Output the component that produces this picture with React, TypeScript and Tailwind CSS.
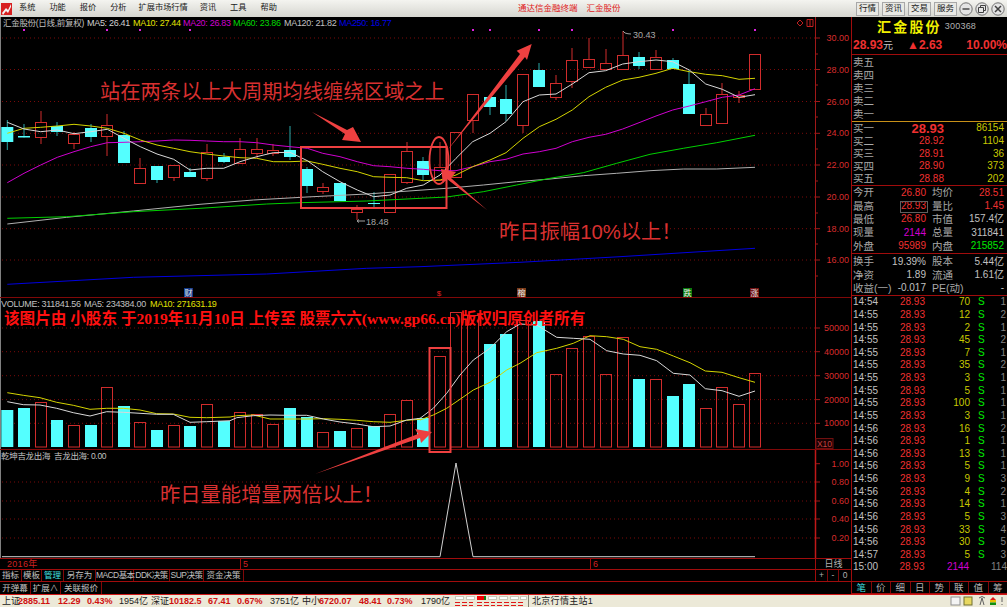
import React from "react";

type Candle = [number, number, number, number, number, "r" | "c"];

// chart data is read off the picture: x, body top, body bottom, wick top, wick bottom
const CANDLES: Candle[] = [
  [7.3, 127, 142, 120, 150, "c"],
  [24, 136, 137.5, 124, 137.5, "c"],
  [41, 122, 137, 111, 144, "r"],
  [57, 126, 132, 122, 136, "c"],
  [74, 134, 143, 132, 149, "r"],
  [91, 128, 137, 124, 142, "c"],
  [107, 125, 136, 114, 156, "r"],
  [124, 135, 163, 131, 163, "c"],
  [140, 168, 183, 158, 183, "r"],
  [157, 166, 180, 166, 183, "c"],
  [174, 165, 177, 165, 181, "r"],
  [190, 172, 177, 168, 177, "c"],
  [207, 152, 178, 144, 181, "r"],
  [224, 157, 162, 153, 163, "c"],
  [240, 149, 163, 138, 163, "r"],
  [257, 149, 153, 138, 158, "r"],
  [273, 150, 153, 144, 156, "r"],
  [290, 150, 157, 126, 160, "c"],
  [307, 169, 186, 167, 193, "c"],
  [323, 187, 191, 183, 194, "r"],
  [340, 183, 201, 183, 201, "c"],
  [357, 209, 212, 205, 220, "r"],
  [374, 203, 204, 192, 208, "c"],
  [390, 174, 212, 174, 212, "r"],
  [407, 151, 182, 142, 184, "r"],
  [423, 161, 175, 157, 180, "c"],
  [440, 167, 180, 142, 180, "r"],
  [456, 132, 177, 132, 177, "r"],
  [473, 94, 120, 94, 133, "r"],
  [490, 97, 107, 97, 115, "c"],
  [506, 99, 114, 85, 121, "c"],
  [523, 74, 125, 74, 133, "r"],
  [539, 70, 87, 63, 87, "c"],
  [556, 83, 97, 75, 100, "r"],
  [572, 60, 81, 48, 88, "r"],
  [589, 59, 67, 38, 67, "r"],
  [606, 63, 69, 49, 69, "r"],
  [623, 55, 69, 31, 69, "r"],
  [639, 57, 66, 52, 69, "c"],
  [656, 57, 69, 50, 69, "r"],
  [673, 60, 69, 58, 69, "c"],
  [689, 84, 114, 70, 114, "c"],
  [706, 114, 125, 108, 125, "r"],
  [722, 94, 123, 83, 123, "r"],
  [739, 95, 97, 91, 103, "r"],
  [755, 54, 89, 54, 89, "r"],
];

const VOL_BARS: [number, number, "r" | "c"][] = [
  [7.3, 410, "c"], [24, 408, "c"], [41, 402, "r"], [57, 420, "c"], [74, 425, "r"], [91, 425, "c"],
  [107, 387, "r"], [124, 406, "c"], [140, 422, "r"], [157, 430, "c"], [174, 425, "r"], [190, 426, "c"],
  [207, 404, "r"], [224, 421, "c"], [240, 412, "r"], [257, 414, "r"], [273, 424, "r"], [290, 408, "c"],
  [307, 417, "c"], [323, 432, "r"], [340, 431, "c"], [357, 428, "r"], [374, 426, "c"], [390, 414, "r"],
  [407, 400, "r"], [423, 418, "c"], [440, 356, "r"], [456, 312, "r"], [473, 315, "r"], [490, 344, "c"],
  [506, 334, "c"], [523, 320, "r"], [539, 321, "c"], [556, 374, "r"], [572, 348, "r"], [589, 336, "r"],
  [606, 374, "r"], [623, 337, "r"], [639, 379, "c"], [656, 379, "r"], [673, 396, "c"], [689, 384, "c"],
  [706, 408, "r"], [722, 387, "r"], [739, 404, "r"], [755, 373, "r"],
];

const pts = (ox: number, oy: number, list: number[][]) =>
  list.map(([x, y]) => `${(ox + x / 3).toFixed(1)},${(oy + y / 3).toFixed(1)}`).join(" ");

const MA5 =
  pts(0, 0, [[22,367],[72,387],[122,395],[172,390],[222,401],[272,395],[322,388],[372,415],[421,440],[471,462],[521,478],[570,510],[620,505],[671,505],[720,485],[770,470],[820,458],[870,457],[922,482],[968,515],[1020,545],[1072,570],[1121,590],[1170,585],[1220,565],[1270,555],[1320,525]]) +
  " " +
  pts(450, 0, [[18,475],[68,425],[120,400],[168,365],[219,305],[268,285],[318,282],[367,252],[417,218],[467,212],[518,192],[567,185],[618,180],[668,185],[718,210],[767,252],[817,268],[867,292],[915,284]]);
const MA10 =
  pts(0, 0, [[22,400],[72,385],[122,382],[172,378],[222,373],[272,378],[322,385],[372,400],[421,420],[471,435],[521,445],[570,455],[620,462],[671,468],[720,473],[770,475],[820,485],[870,485],[922,483],[968,493],[1020,505],[1072,515],[1121,530],[1170,532],[1220,533],[1270,542],[1320,540]]) +
  " " +
  pts(450, 0, [[18,525],[68,500],[120,480],[168,458],[219,415],[268,380],[318,358],[367,330],[417,290],[467,262],[518,240],[567,232],[618,220],[668,205],[718,215],[767,223],[817,227],[867,238],[915,235]]);
const MA20 =
  pts(0, 0, [[22,548],[72,520],[122,495],[172,472],[222,455],[272,440],[322,428],[372,427],[421,425],[471,423],[521,420],[570,421],[620,423],[671,425],[720,425],[770,428],[820,435],[870,440],[922,445],[968,460],[1020,470],[1072,485],[1121,497],[1170,500],[1220,505],[1270,508],[1320,512]]) +
  " " +
  pts(450, 0, [[18,512],[68,500],[120,485],[168,478],[219,462],[268,455],[318,445],[367,425],[417,412],[467,403],[518,387],[567,368],[618,348],[668,330],[718,318],[767,305],[817,292],[867,285],[915,266]]);
const MA60 =
  pts(0, 200, [[22,55],[200,50],[400,35],[600,25],[800,12],[900,8],[1100,3],[1340,-9]]) +
  " " +
  pts(450, 0, [[100,575],[200,555],[300,535],[400,518],[500,490],[600,463],[700,445],[800,428],[915,406]]);
const MA120 =
  pts(0, 200, [[22,72],[200,52],[400,33],[600,13],[760,0],[920,-9],[1100,-18],[1340,-35]]) +
  " " +
  pts(450, 0, [[100,555],[200,545],[300,537],[400,527],[500,520],[600,512],[700,507],[800,507],[915,502]]);
const MA250 =
  pts(0, 200, [[22,253],[400,232],[800,222],[1100,205],[1260,200]]) +
  " " +
  pts(420, 200, [[300,187],[600,170],[1005,145]]);

const VOL_WHITE =
  pts(0, 370, [[22,95],[70,104],[120,105],[170,115],[220,128],[270,138],[320,125],[370,127],[420,130],[470,133],[520,133],[570,157],[620,155],[690,152]]) +
  " " +
  pts(220, 370, [[50,143],[100,137],[150,135],[200,136],[260,136],[310,147],[360,156],[410,162],[460,170],[510,168],[560,150],[600,145]]) +
  " " +
  pts(420, 200, [[0,655],[40,625],[80,580],[120,525],[160,480],[210,445],[260,395],[300,372],[350,375],[410,412],[460,415],[510,418],[560,452],[610,462],[660,466],[710,482],[760,520],[810,525],[856,566],[906,572],[957,589],[1005,573]]);
const VOL_YELLOW =
  pts(0, 370, [[22,68],[70,76],[120,83],[170,97],[220,106],[270,118],[320,115],[370,115],[420,120],[470,131],[520,132],[570,142],[620,143],[690,141]]) +
  " " +
  pts(220, 370, [[50,137],[100,135],[150,147],[200,147],[260,147],[310,146],[360,148],[410,151],[460,155],[510,157],[560,151],[600,148]]) +
  " " +
  pts(420, 200, [[0,660],[40,645],[80,625],[120,598],[160,570],[210,547],[260,510],[300,490],[350,458],[410,445],[460,430],[510,407],[560,410],[610,418],[660,440],[710,448],[760,468],[810,488],[856,513],[906,517],[957,533],[1005,547]]);

const RED = "#d02c2c";
const CYAN = "#54ffff";
const GRID = "#7a0a0a";
const AXIS = "#a01818";
const ANNOT = "#ee4040";

function Grid({ ys }: { ys: number[] }) {
  return (
    <>
      {ys.map((y) => (
        <line key={y} x1={2} x2={815} y1={y} y2={y} stroke={GRID} strokeDasharray="1 3" />
      ))}
    </>
  );
}

function AxisLabels({ rows }: { rows: [number, string][] }) {
  return (
    <>
      {rows.map(([y, label]) => (
        <g key={label}>
          <line x1={816} x2={820} y1={y} y2={y} stroke={AXIS} />
          <text x={849} y={y + 3} fontSize="9" fill="#d82c2c" textAnchor="end">
            {label}
          </text>
        </g>
      ))}
    </>
  );
}

const PRICE_ROWS: [number, string][] = [
  [38, "30.00"], [69.5, "28.00"], [101.5, "26.00"], [133.3, "24.00"],
  [165, "22.00"], [197, "20.00"], [228.7, "18.00"], [260, "16.00"],
];

function PriceChart() {
  const marks = [24, 107, 140, 190, 473, 490, 539, 572, 673, 755];
  return (
    <svg viewBox="0 17 851 280" className="block w-[851px] h-[280px]">
      <Grid ys={PRICE_ROWS.map((r) => r[0])} />
      <line x1={0.5} x2={0.5} y1={17} y2={297} stroke="#808080" />
      <line x1={815.5} x2={815.5} y1={17} y2={297} stroke={AXIS} />
      <AxisLabels rows={PRICE_ROWS} />
      {[54, 85, 117, 149, 181, 213, 244, 276].map((y) => (
        <line key={y} x1={816} x2={818} y1={y} y2={y} stroke={AXIS} />
      ))}
      {marks.map((x) => (
        <path key={x} d={`M${x - 1} 29 l2 2 M${x + 1} 29 l-2 2`} stroke="#e020e0" />
      ))}
      {CANDLES.map(([x, top, bottom, hi, lo, kind]) =>
        kind === "c" ? (
          <g key={x}>
            <line x1={x} x2={x} y1={hi} y2={lo} stroke="#2aa8a8" />
            <rect x={x - 6} y={top} width={12} height={bottom - top} fill={CYAN} />
          </g>
        ) : (
          <g key={x} stroke={RED} fill="none">
            <line x1={x} x2={x} y1={hi} y2={top} />
            <line x1={x} x2={x} y1={bottom} y2={lo} />
            <rect x={x - 5.5} y={top + 0.5} width={11} height={bottom - top} />
          </g>
        )
      )}
      <polyline points={MA250} fill="none" stroke="#0000e0" />
      <polyline points={MA120} fill="none" stroke="#b0b0b0" />
      <polyline points={MA60} fill="none" stroke="#00d000" />
      <polyline points={MA20} fill="none" stroke="#d000d0" />
      <polyline points={MA10} fill="none" stroke="#d4d400" />
      <polyline points={MA5} fill="none" stroke="#d8d8d8" />
      <path d="M623 31 l2 2 q3 1 6 1" stroke="#a0a0a0" fill="none" />
      <text x={633} y={38} fontSize="9" fill="#a8a8a8">30.43</text>
      <path d="M357 221 h8 M357 221 l2 -1.500 M357 221 l2 1.500" stroke="#a0a0a0" fill="none" />
      <text x={366} y={225} fontSize="9" fill="#a8a8a8">18.48</text>
      <path d="M800 20 l3 3 l-3 3 l-3 -3 z" fill="none" stroke="#c02020" />
      <path d="M807 19.500 h6 v7 h-6 z M810 19.500 v7" fill="none" stroke="#c02020" />

      <rect x={184} y={288} width={9} height={9} fill="#123a8a" />
      <text x={188.5} y={296} fontSize="8" fill="#e8e8e8" textAnchor="middle">财</text>
      <text x={439} y={296} fontSize="8" fill="#e02020" textAnchor="middle">$</text>
      <rect x={517} y={288} width={9} height={9} fill="#7a3a18" />
      <text x={521.500} y={296} fontSize="8" fill="#e8e8e8" textAnchor="middle">榕</text>
      <rect x={683} y={288} width={9} height={9} fill="#0a7a0a" />
      <text x={687.500} y={296} fontSize="8" fill="#e8e8e8" textAnchor="middle">跌</text>
      <rect x={750} y={288} width={9} height={9} fill="#701010" />
      <text x={754.500} y={296} fontSize="8" fill="#e8e8e8" textAnchor="middle">涨</text>
    </svg>
  );
}

const VOL_ROWS: [number, string][] = [
  [328, "50000"], [351.7, "40000"], [375.7, "30000"], [399.6, "20000"], [423.3, "10000"],
];

function VolumeChart() {
  return (
    <svg viewBox="0 298 851 151" className="block w-[851px] h-[151px]">
      <Grid ys={VOL_ROWS.map((r) => r[0])} />
      <line x1={0.5} x2={0.5} y1={298} y2={449} stroke="#808080" />
      <line x1={815.5} x2={815.5} y1={298} y2={449} stroke={AXIS} />
      <AxisLabels rows={VOL_ROWS} />
      {VOL_BARS.map(([x, top, kind]) =>
        kind === "c" ? (
          <rect key={x} x={x - 6} y={top} width={12} height={447 - top} fill={CYAN} />
        ) : (
          <rect key={x} x={x - 5.500} y={top + 0.500} width={11} height={447 - top - 0.500} fill="none" stroke={RED} />
        )
      )}
      <polyline points={VOL_YELLOW} fill="none" stroke="#d4d400" />
      <polyline points={VOL_WHITE} fill="none" stroke="#d8d8d8" />
      <rect x={816} y={438.500} width={17} height={10} fill="#1a0000" stroke="#701010" />
      <text x={824.500} y={446.500} fontSize="8.500" fill="#c04040" textAnchor="middle">X10</text>
    </svg>
  );
}

const IND_ROWS: [number, string][] = [
  [463.7, "1.00"], [482, "0.80"], [501, "0.60"], [519, "0.40"], [538, "0.20"],
];

function IndicatorChart() {
  return (
    <svg viewBox="0 450 851 108" className="block w-[851px] h-[108px]">
      <Grid ys={IND_ROWS.slice(1).map((r) => r[0])} />
      <line x1={0.5} x2={0.5} y1={450} y2={558} stroke="#808080" />
      <line x1={815.5} x2={815.5} y1={450} y2={558} stroke="#c01818" strokeWidth="1.500" />
      <AxisLabels rows={IND_ROWS} />
      <polyline
        points="2,556.700 440,556.700 456,463 473,556.700 755,556.700"
        fill="none"
        stroke="#d0d0d0"
      />
    </svg>
  );
}

function Annotations() {
  return (
    <svg viewBox="0 17 851 541" className="absolute left-0 top-0 w-[851px] h-[541px]">
      <rect x={301} y={147} width={145.500} height={61} fill="none" stroke={ANNOT} strokeWidth="2" />
      <rect x={429.500} y={348} width={21} height={104} fill="none" stroke={ANNOT} strokeWidth="2" />
      <ellipse cx={439} cy={160.500} rx={9.500} ry={23.500} fill="none" stroke={ANNOT} strokeWidth="1.800" />
      <polygon fill={ANNOT} points="312,112 347,130 353,127 361,142 342,140 345,134" />
      <polygon fill={ANNOT} points="446,152 520,54 516.700,50.700 531.700,44 527,60 525,57" />
      <polygon fill={ANNOT} points="441,169 456,172 451,178 487,210 447,179 443,183" />
      <polygon fill={ANNOT} points="315,474 418,434 415,429 432,432 421,443 420,438" />
    </svg>
  );
}

const TABS: [string, string, string][] = [
  ["指标", "w-[22px]", "text-[#c0c0c0]"],
  ["模板", "w-[20px]", "text-[#c0c0c0]"],
  ["管理", "w-[22px]", "text-[#40e0e0]"],
  ["另存为", "w-[32px]", "text-[#c0c0c0]"],
  ["MACD基本", "w-[38px] tracking-[-0.6px]", "text-[#c0c0c0]"],
  ["DDK决策", "w-[36px] tracking-[-0.5px]", "text-[#c0c0c0]"],
  ["SUP决策", "w-[34px] tracking-[-0.5px]", "text-[#c0c0c0]"],
  ["资金决策", "w-[40px]", "text-[#c0c0c0]"],
];

const TABS2: [string, string][] = [
  ["开弹幕", "w-[31px]"],
  ["扩展∧", "w-[30px]"],
  ["关联报价", "w-[41px]"],
];

function LeftColumn() {
  return (
    <div className="flex flex-col w-[851px]">
      <div className="relative">
        <div className="relative border-b border-[#800808]">
          <PriceChart />
          <div className="absolute left-[3px] top-[1px] flex h-[10px] items-center text-[9px] leading-none tracking-[-0.3px] whitespace-nowrap">
            <span className="w-[84px] text-[8.5px] text-[#c0c0c0]">汇金股份(日线,前复权)</span>
            <span className="w-[46px] text-[#d0d0d0]">MA5: 26.41</span>
            <span className="w-[50px] text-[#e0e000]">MA10: 27.44</span>
            <span className="w-[50px] text-[#d000d0]">MA20: 26.83</span>
            <span className="w-[51px] text-[#00d800]">MA60: 23.86</span>
            <span className="w-[55px] text-[#c0c0c0]">MA120: 21.82</span>
            <span className="text-[#0000e8]">MA250: 16.77</span>
          </div>
        </div>
        <div className="relative border-b border-[#800808]">
          <VolumeChart />
          <div className="absolute left-[1px] top-[1px] flex h-[10px] items-center text-[9px] leading-none tracking-[-0.3px] whitespace-nowrap">
            <span className="w-[83px] text-[#c0c0c0]">VOLUME: 311841.56</span>
            <span className="w-[66px] text-[#c0c0c0]">MA5: 234384.00</span>
            <span className="text-[#e0e000]">MA10: 271631.19</span>
          </div>
        </div>
        <div className="relative border-b border-[#a00c0c]">
          <IndicatorChart />
          <div className="absolute left-[1px] top-[1px] flex h-[10px] items-center text-[8.5px] leading-none tracking-[-0.3px] whitespace-nowrap text-[#c0c0c0]">
            <span className="w-[53px]">乾坤吉龙出海</span>
            <span>吉龙出海: 0.00</span>
          </div>
        </div>

        <Annotations />
        <div className="absolute left-[100px] top-[63px] text-[20.3px] leading-[24px] text-[#d83030] whitespace-nowrap">
          站在两条以上大周期均线缠绕区域之上
        </div>
        <div className="absolute left-[499px] top-[203px] text-[20.3px] leading-[24px] text-[#d83030] whitespace-nowrap">
          昨日振幅10%以上！
        </div>
        <div className="absolute left-[160px] top-[466px] text-[20.3px] leading-[24px] text-[#d83030] whitespace-nowrap">
          昨日量能增量两倍以上！
        </div>
        <div className="absolute left-[4px] top-[292px] text-[15.6px] leading-[20px] font-bold text-[#ff1010] whitespace-nowrap font-['Liberation_Serif','Noto_Sans_CJK_SC',serif]">
          该图片由 小股东 于2019年11月10日 上传至 股票六六(www.gp66.cn)版权归原创者所有
        </div>
      </div>

      <div className="flex h-[11px] border-b border-[#a00c0c] text-[9px] leading-[10px]">
        <div className="w-[240px] pl-[7px] text-[#d02020] tracking-[0.3px]">2016年</div>
        <div className="w-[350px] border-l border-[#a00c0c] pl-[2px] text-[#d02020]">5</div>
        <div className="w-[225px] border-l border-[#a00c0c] pl-[2px] text-[#d02020]">6</div>
        <div className="flex-1 border-l border-[#a00c0c] text-center text-[#b0b0b0]">日线</div>
      </div>

      <div className="flex h-[12px] border-b border-[#a00c0c] text-[8.5px] leading-[11px]">
        {TABS.map(([label, width, color]) => (
          <div key={label} className={`${width} ${color} shrink-0 border-r border-[#800808] text-center whitespace-nowrap`}>
            {label}
          </div>
        ))}
        <div className="flex-1" />
        <div className="flex w-[36px] border-l border-[#a00c0c] text-center text-[#b0b0b0]">
          <span className="w-[12px] border-r border-[#800808]">+</span>
          <span className="w-[11px] border-r border-[#800808]">-</span>
          <span className="flex-1">0</span>
        </div>
      </div>

      <div className="flex h-[12px] text-[8.5px] leading-[12px] text-[#c0c0c0]">
        {TABS2.map(([label, width]) => (
          <div key={label} className={`${width} shrink-0 border-r border-[#800808] text-center whitespace-nowrap`}>
            {label}
          </div>
        ))}
      </div>
    </div>
  );
}

const BUY = [
  ["买一", "28.93", "86154"],
  ["买二", "28.92", "1104"],
  ["买三", "28.91", "36"],
  ["买四", "28.90", "373"],
  ["买五", "28.88", "202"],
];

const TRADES: [string, string][] = [
  ["14:54", "70"], ["14:55", "12"], ["14:55", "2"], ["14:55", "45"], ["14:55", "7"], ["14:55", "35"],
  ["14:55", "3"], ["14:55", "5"], ["14:55", "100"], ["14:55", "3"], ["14:56", "16"], ["14:56", "1"],
  ["14:56", "13"], ["14:56", "5"], ["14:56", "9"], ["14:56", "4"], ["14:56", "14"], ["14:56", "5"],
  ["14:56", "33"], ["14:56", "30"], ["14:57", "5"],
];
const COUNTS = ["1", "2", "1", "2", "1", "2", "1", "1", "1", "1", "2", "1", "1", "1", "3", "2", "1", "3", "4", "5", "3"];

const BOTTOM_TABS = ["笔", "价", "细", "日", "势", "联", "值", "筹"];

function Stat({
  a,
  v1,
  c1,
  b,
  v2,
  c2,
}: {
  a: string;
  v1: string;
  c1: string;
  b: string;
  v2: string;
  c2: string;
}) {
  return (
    <div className="flex h-[13.3px] items-center text-[10px] leading-none">
      <span className="w-[22px] text-[10.5px] text-[#a8a8a8] whitespace-nowrap">{a}</span>
      <span className={`w-[51px] text-right ${c1}`}>{v1}</span>
      <span className="ml-[6px] w-[22px] text-[10.5px] text-[#a8a8a8] whitespace-nowrap">{b}</span>
      <span className={`w-[50px] text-right ${c2}`}>{v2}</span>
    </div>
  );
}

function RightPanel() {
  return (
    <div className="flex flex-col w-[156px] border-l border-[#a00c0c]">
      <div className="flex h-[20px] items-center pl-[25px]">
        <span className="text-[14px] font-bold tracking-[2.2px] text-[#f0f000]">汇金股份</span>
        <span className="ml-[3px] text-[9px] text-[#b0b0b0] tracking-[0.2px]">300368</span>
      </div>
      <div className="flex h-[18px] items-center border-b border-[#a00c0c] pb-[1px] pl-[1px] text-[12px] font-bold text-[#f03030] whitespace-nowrap">
        <span className="w-[46px]">
          28.93<span className="text-[10px] font-normal text-[#c0c0c0]">元</span>
        </span>
        <span className="w-[56px] pl-[8px]">▲2.63</span>
        <span className="flex-1 text-right">10.00%</span>
      </div>

      <div className="flex h-[67px] flex-col border-b border-[#c89018] pt-[1px] pl-[1px] text-[10.5px] text-[#a8a8a8]">
        {["卖五", "卖四", "卖三", "卖二", "卖一"].map((s) => (
          <div key={s} className="h-[12.9px] leading-[13px]">{s}</div>
        ))}
      </div>

      <div className="flex h-[64px] flex-col border-b border-[#a00c0c] pl-[1px]">
        {BUY.map(([label, price, vol], i) => (
          <div key={label} className="flex h-[12.8px] items-center leading-none">
            <span className="w-[22px] text-[10.5px] text-[#a8a8a8]">{label}</span>
            <span
              className={`w-[69px] text-right text-[#f03030] ${i === 0 ? "text-[13px] font-bold" : "text-[10px]"}`}
            >
              {price}
            </span>
            <span className="w-[60px] text-right text-[10px] text-[#c8c800]">{vol}</span>
          </div>
        ))}
      </div>

      <div className="relative flex h-[68px] flex-col border-b border-[#a00c0c] pl-[1px]">
        <Stat a="今开" v1="26.80" c1="text-[#f03030]" b="均价" v2="28.51" c2="text-[#f03030]" />
        <Stat a="最高" v1="28.93" c1="text-[#f03030]" b="量比" v2="1.45" c2="text-[#f03030]" />
        <Stat a="最低" v1="26.80" c1="text-[#f03030]" b="市值" v2="157.4亿" c2="text-[#c0c0c0]" />
        <Stat a="现量" v1="2144" c1="text-[#d000d0]" b="总量" v2="311841" c2="text-[#c0c0c0]" />
        <Stat a="外盘" v1="95989" c1="text-[#f03030]" b="内盘" v2="215852" c2="text-[#00e800]" />
        <div className="absolute left-[48px] top-[15px] h-[12px] w-[28px] border border-[#606060]" />
      </div>

      <div className="flex h-[42px] flex-col border-b border-[#a00c0c] pt-[1px] pl-[1px]">
        <Stat a="换手" v1="19.39%" c1="text-[#c0c0c0]" b="股本" v2="5.44亿" c2="text-[#c0c0c0]" />
        <Stat a="净资" v1="1.89" c1="text-[#c0c0c0]" b="流通" v2="1.61亿" c2="text-[#c0c0c0]" />
        <Stat a="收益(一)" v1="-0.017" c1="text-[#c0c0c0]" b="PE(动)" v2="-" c2="text-[#c0c0c0]" />
      </div>

      <div className="flex flex-1 flex-col pl-[1px] text-[10px] leading-none">
        {TRADES.map(([time, vol], i) => (
          <div key={i} className="flex h-[12.63px] items-center">
            <span className="w-[27px] text-[#c0c0c0]">{time}</span>
            <span className="w-[45px] text-right text-[#f03030]">28.93</span>
            <span className="w-[45px] text-right text-[#c8c800]">{vol}</span>
            <span className="ml-[8px] w-[8px] text-[#00e800]">S</span>
            <span className="w-[20px] text-right text-[#808080]">{COUNTS[i]}</span>
          </div>
        ))}
        <div className="flex h-[12.63px] items-center">
          <span className="w-[27px] text-[#c0c0c0]">15:00</span>
          <span className="w-[45px] text-right text-[#f03030]">28.93</span>
          <span className="w-[45px] text-right text-[#d000d0]">2144</span>
          <span className="ml-[8px] w-[8px]" />
          <span className="w-[22px] text-right text-[#808080]">114</span>
        </div>
      </div>

      <div className="flex h-[13px] border-y border-[#a00c0c] text-[9.5px] leading-[11px]">
        {BOTTOM_TABS.map((t, i) => (
          <div
            key={t}
            className={`flex-1 border-r border-[#800808] text-center last:border-r-0 ${
              i === 0 ? "text-[#40e0e0]" : "text-[#b0b0b0]"
            }`}
          >
            {t}
          </div>
        ))}
      </div>
    </div>
  );
}

function Logo() {
  return (
    <svg viewBox="0 0 13 14" className="h-[14px] w-[13px] shrink-0">
      <rect x="1" y="1" width="11" height="12" fill="#d82020" />
      <path d="M2 11 L6 6 L8 8 L11 2 L11 5 L8 11 L6 9 L3 13 Z" fill="#f4f4f4" />
    </svg>
  );
}

function WindowButton({ kind }: { kind: "min" | "max" | "close" }) {
  return (
    <svg viewBox="0 0 14 14" className="h-[14px] w-[14px]">
      <circle cx="7" cy="7" r="6.200" fill="#e4e4e4" stroke="#707070" />
      {kind === "min" && <path d="M3.500 7 h7" stroke="#404040" strokeWidth="1.400" />}
      {kind === "max" && <path d="M3.500 5.500 h5 v5 h-5 z M5.500 5.500 v-2 h5 v5 h-2" fill="none" stroke="#404040" />}
      {kind === "close" && <path d="M4 4 l6 6 M10 4 l-6 6" stroke="#404040" strokeWidth="1.500" />}
    </svg>
  );
}

function TitleBar() {
  return (
    <div className="flex h-[17px] shrink-0 items-center bg-linear-to-b from-[#f4f4f0] to-[#d6d6d0] text-[#202020]">
      <Logo />
      <nav className="ml-[6px] flex gap-[14px] text-[8.2px] whitespace-nowrap">
        <span>系统</span>
        <span>功能</span>
        <span>报价</span>
        <span>分析</span>
        <span className="ml-[-2px]">扩展市场行情</span>
        <span className="ml-[-2px]">资讯</span>
        <span>工具</span>
        <span>帮助</span>
      </nav>
      <div className="ml-[241px] flex gap-[9px] text-[8.5px] text-[#e02020] whitespace-nowrap">
        <span>通达信金融终端</span>
        <span>汇金股份</span>
      </div>
      <div className="ml-auto flex gap-[3px] text-[8.5px]">
        {["行情", "资讯", "交易", "服务"].map((b) => (
          <span key={b} className="flex h-[14px] w-[23px] items-center justify-center border border-[#a8a8a8] bg-[#e8e8e4]">
            {b}
          </span>
        ))}
      </div>
      <div className="ml-[2px] mr-[2px] flex gap-[2px]">
        <WindowButton kind="min" />
        <WindowButton kind="max" />
        <WindowButton kind="close" />
      </div>
    </div>
  );
}

const STATUS: [string, string, string][] = [
  ["上证", "w-[16px]", "text-[#202020]"],
  ["2885.11", "w-[40px]", "text-[#d01010] font-bold"],
  ["12.29", "w-[29px]", "text-[#d01010] font-bold"],
  ["0.43%", "w-[32px]", "text-[#d01010] font-bold"],
  ["1954亿", "w-[32px]", "text-[#202020]"],
  ["深证", "w-[18px]", "text-[#202020]"],
  ["10182.5", "w-[39px]", "text-[#d01010] font-bold"],
  ["67.41", "w-[29px]", "text-[#d01010] font-bold"],
  ["0.67%", "w-[33px]", "text-[#d01010] font-bold"],
  ["3751亿", "w-[32px]", "text-[#202020]"],
  ["中小", "w-[17px]", "text-[#202020]"],
  ["6720.07", "w-[40px]", "text-[#d01010] font-bold"],
  ["48.41", "w-[28px]", "text-[#d01010] font-bold"],
  ["0.73%", "w-[34px]", "text-[#d01010] font-bold"],
  ["1790亿", "w-[34px]", "text-[#202020]"],
];

function StatusBar() {
  return (
    <div className="flex h-[13px] shrink-0 items-center border-t border-[#d01818] bg-[#ece9d8] pl-[2px] text-[9px] leading-none whitespace-nowrap">
      {STATUS.map(([t, w, c]) => (
        <span key={t} className={`${w} ${c} shrink-0`}>{t}</span>
      ))}
      <svg viewBox="0 0 72 12" className="h-[12px] w-[72px] shrink-0">
        <g fill="#ffffff" stroke="#c8c8b8">
          <rect x="0.500" y="1.500" width="8" height="3" />
          <rect x="11.500" y="1.500" width="8" height="3" />
          <rect x="22.500" y="1.500" width="8" height="3" />
          <rect x="33.500" y="1.500" width="8" height="3" />
          <rect x="44.500" y="1.500" width="8" height="3" />
          <rect x="55.500" y="1.500" width="8" height="3" />
          <rect x="65.500" y="1.500" width="6" height="3" />
        </g>
        <rect x="22" y="1" width="7" height="4" fill="#f00000" />
        <rect x="29" y="1" width="2" height="4" fill="#108010" />
        <path
          d="M0 7.500 h5 M7 7.500 h5 M14 7.500 h4 M22 7.500 h5 M29 7.500 h5 M36 7.500 h4 M42 7.500 h5 M49 7.500 h5 M56 7.500 h5 M63 7.500 h5 M0 10.500 h5 M7 10.500 h5 M14 10.500 h4 M22 10.500 h5 M29 10.500 h5 M36 10.500 h4 M42 10.500 h5 M49 10.500 h5 M56 10.500 h5 M63 10.500 h5"
          stroke="#e01818"
        />
      </svg>
      <span className="ml-[1px] h-full w-[1px] shrink-0 bg-[#808070]" />
      <span className="ml-[3px] text-[#202020] tracking-[0.3px]">北京行情主站1</span>
      <svg viewBox="0 0 56 12" className="ml-auto mr-[1px] h-[12px] w-[56px] shrink-0">
        <rect x="1" y="2" width="9" height="8" fill="#f4f4f4" stroke="#909090" />
        <rect x="14" y="2" width="8" height="8" fill="#e8d860" stroke="#707030" />
        <path d="M30 10 l2 -7 l2 7 M29 3 q3 -3 6 0" fill="none" stroke="#606060" />
        <path d="M43 2 l-3 3 h6 z" fill="#e01818" />
        <rect x="40" y="5" width="6" height="2.500" fill="#e8c000" />
        <rect x="40" y="7.500" width="6" height="2.500" fill="#109010" />
        <path d="M52 2 v5 M52 9 v1" stroke="#606060" />
      </svg>
    </div>
  );
}

export default function App() {
  return (
    <div className="flex h-[607px] w-[1007px] flex-col overflow-hidden bg-black font-['Liberation_Sans','Noto_Sans_CJK_SC',sans-serif]">
      <TitleBar />
      <div className="flex h-[577px] shrink-0">
        <LeftColumn />
        <RightPanel />
      </div>
      <StatusBar />
    </div>
  );
}
